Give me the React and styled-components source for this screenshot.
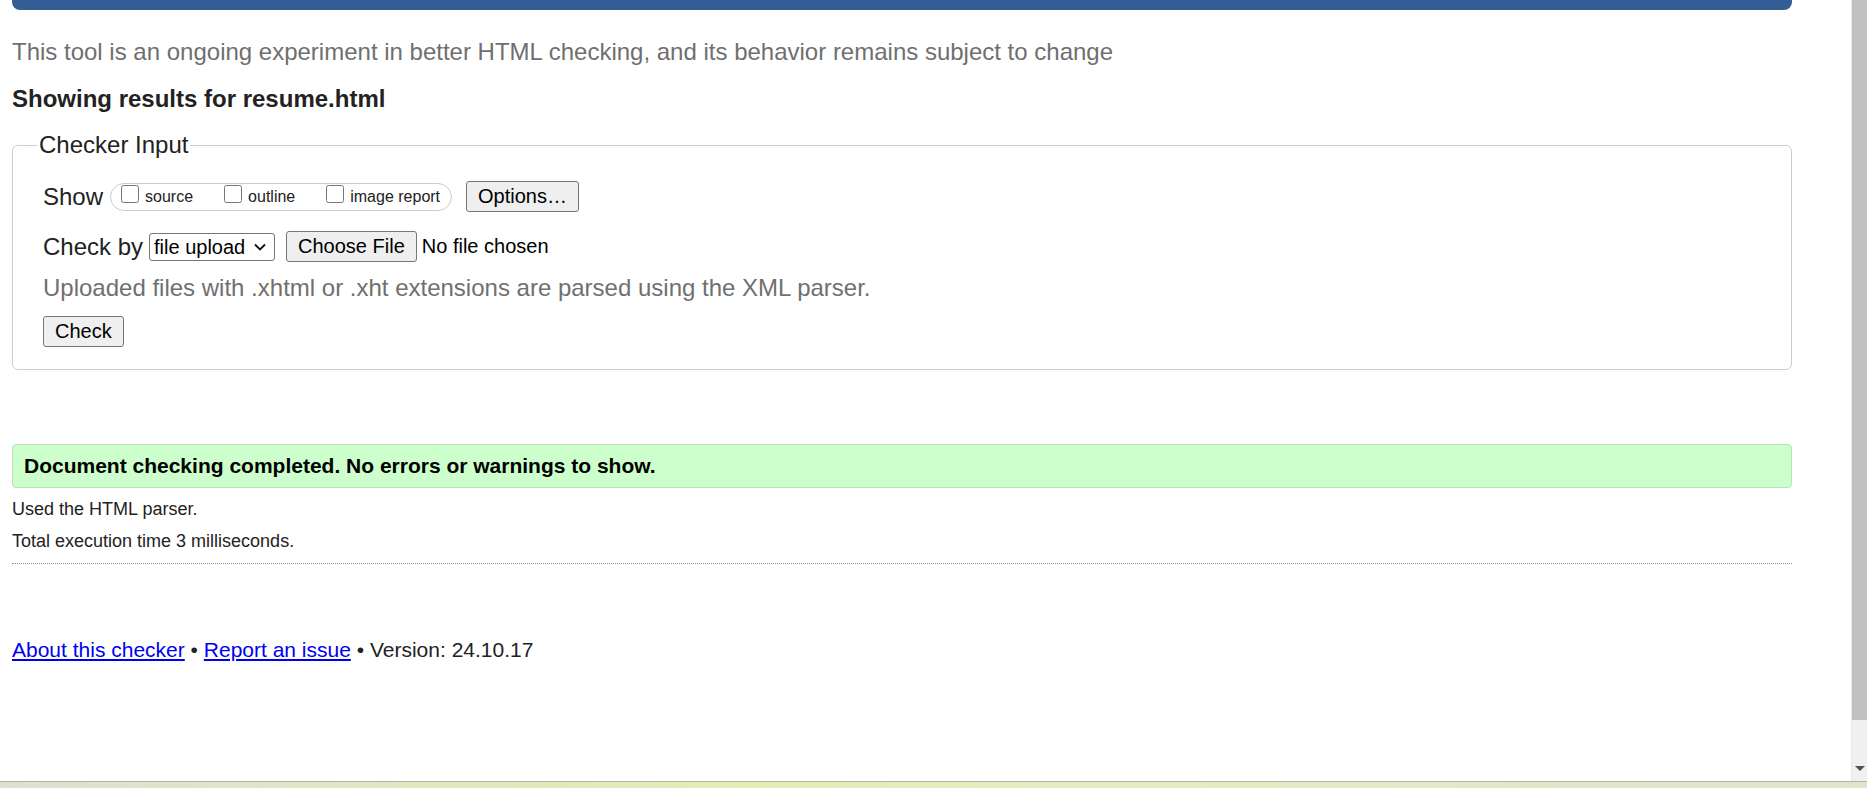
import styled, { createGlobalStyle } from 'styled-components';

const GlobalStyle = createGlobalStyle`
  html, body {
    margin: 0;
    height: 100%;
    overflow: hidden;
    background: #fff;
  }
  body {
    font-family: "Liberation Sans", Arial, sans-serif;
    color: #222;
  }
  #root {
    height: 100%;
  }
`

const Screen = styled.div`
  display: grid;
  grid-template-columns: 1fr 16px;
  grid-template-rows: 1fr 7px;
  height: 100vh;
`

const Viewport = styled.div`
  overflow: hidden;
  background: #fff;
`

const Page = styled.div`
  padding: 0 59px 0 12px;
`

const HeaderBar = styled.div`
  height: 10px;
  background: #365e96;
  border-radius: 0 0 8px 8px;
`

const Intro = styled.p`
  margin: 28px 0 0;
  font-size: 24px;
  line-height: 28px;
  color: #6f6f6f;
`

const Heading = styled.h2`
  margin: 19px 0 0;
  font-size: 24px;
  line-height: 28px;
  font-weight: bold;
  color: #222;
`

const InputSet = styled.fieldset`
  margin: 18px 0 0;
  padding: 22px 24px 22px 30px;
  border: 1px solid #cdcdcd;
  border-radius: 6px;
  min-width: 0;
`

const Legend = styled.legend`
  margin-left: -6px;
  padding: 0 2px;
  font-size: 24px;
  line-height: 28px;
  color: #222;
`

const Row = styled.div`
  display: flex;
  align-items: center;
  margin-top: ${p => p.$top || 0}px;
  font-size: 24px;
`

const Label = styled.span`
  font-size: 24px;
  line-height: 28px;
  color: #222;
`

const Pill = styled.div`
  display: flex;
  align-items: center;
  gap: 31px;
  height: 26px;
  margin-left: 7px;
  padding: 0 11px 0 10px;
  border: 1px solid #cccccc;
  border-radius: 14px;
`

const CheckItem = styled.label`
  display: flex;
  align-items: center;
  gap: 6px;
  font-size: 16px;
  line-height: 18px;
  color: #222;
`

const Box = styled.input`
  width: 18px;
  height: 18px;
  margin: 0 0 5px;
`

const Button = styled.button`
  height: 31px;
  margin-left: ${p => p.$left || 0}px;
  padding: 0 11px;
  font-family: "Liberation Sans", Arial, sans-serif;
  font-size: 20px;
  color: #000;
  background: #efefef;
  border: 1px solid #767676;
  border-radius: 3px;
`

const SelectWrap = styled.div`
  display: flex;
  align-items: center;
  box-sizing: border-box;
  width: 126px;
  height: 28px;
  margin-left: 6px;
  padding: 0 8px 0 4px;
  background: #fff;
  border: 1px solid #767676;
  border-radius: 3px;
`

const Select = styled.select`
  flex: 1;
  min-width: 0;
  appearance: none;
  padding: 0;
  font-family: "Liberation Sans", Arial, sans-serif;
  font-size: 20px;
  color: #000;
  background: transparent;
  border: 0;
  outline: none;
`

const Chevron = () => (
  <svg width="12" height="8" viewBox="0 0 12 8">
    <path d="M1 1.5 L6 6.5 L11 1.5" fill="none" stroke="#111" strokeWidth="1.8"/>
  </svg>
)

const FileState = styled.span`
  margin-left: 5px;
  font-size: 20px;
  color: #000;
`

const Note = styled.p`
  margin: 12px 0 0;
  font-size: 24px;
  line-height: 28px;
  color: #707070;
`

const CheckRow = styled.div`
  margin-top: 14px;
`

const Success = styled.div`
  margin-top: 74px;
  padding: 9px 11px 9px;
  font-size: 21px;
  line-height: 24px;
  font-weight: bold;
  color: #000;
  background: #ccffcc;
  border: 1px solid #bcdfbc;
  border-radius: 4px;
`

const Detail = styled.p`
  margin: ${p => p.$top}px 0 0;
  font-size: 18px;
  line-height: 21px;
  color: #222;
`

const Rule = styled.hr`
  margin: 11px 0 0;
  border: 0;
  border-top: 1px dotted #8a8a8a;
  height: 0;
`

const Footer = styled.p`
  margin: 74px 0 0;
  font-size: 21px;
  line-height: 24px;
  color: #222;
`

const Link = styled.a`
  color: #0000ee;
  text-decoration: underline;
`

const Scrollbar = styled.div`
  display: flex;
  flex-direction: column;
  background: #f0f0f0;
  border-left: 1px solid #e8e8e8;
`

const Thumb = styled.div`
  height: 720px;
  background: #c1c1c1;
`

const Track = styled.div`
  flex: 1;
  display: flex;
  align-items: flex-end;
  justify-content: center;
  padding-bottom: 10px;
`

const Arrow = styled.div`
  width: 0;
  height: 0;
  border-left: 5px solid transparent;
  border-right: 5px solid transparent;
  border-top: 5px solid #505050;
`

const Taskbar = styled.div`
  grid-column: 1 / 3;
  border-top: 1px solid #b2b3a4;
  background: linear-gradient(90deg, #dfe0d2 0%, #e3edb4 40%, #e6edc2 55%, #e1e3cc 100%);
`

const App = () => {
  return (
    <>
      <GlobalStyle/>
      <Screen>
        <Viewport>
          <Page>
            <HeaderBar/>
            <Intro>This tool is an ongoing experiment in better HTML checking, and its behavior remains subject to change</Intro>
            <Heading>Showing results for resume.html</Heading>

            <InputSet>
              <Legend>Checker Input</Legend>
              <Row>
                <Label>Show</Label>
                <Pill>
                  <CheckItem><Box type="checkbox"/>source</CheckItem>
                  <CheckItem><Box type="checkbox"/>outline</CheckItem>
                  <CheckItem><Box type="checkbox"/>image report</CheckItem>
                </Pill>
                <Button $left={14}>Options…</Button>
              </Row>
              <Row $top={19}>
                <Label>Check by</Label>
                <SelectWrap>
                  <Select defaultValue="file">
                    <option value="file">file upload</option>
                    <option value="address">address</option>
                    <option value="text">text input</option>
                  </Select>
                  <Chevron/>
                </SelectWrap>
                <Button $left={11}>Choose File</Button>
                <FileState>No file chosen</FileState>
              </Row>
              <Note>Uploaded files with .xhtml or .xht extensions are parsed using the XML parser.</Note>
              <CheckRow>
                <Button>Check</Button>
              </CheckRow>
            </InputSet>

            <Success>Document checking completed. No errors or warnings to show.</Success>
            <Detail $top={11}>Used the HTML parser.</Detail>
            <Detail $top={11}>Total execution time 3 milliseconds.</Detail>
            <Rule/>

            <Footer>
              <Link href="#about">About this checker</Link> • <Link href="#issue">Report an issue</Link> • Version: 24.10.17
            </Footer>
          </Page>
        </Viewport>
        <Scrollbar>
          <Thumb/>
          <Track><Arrow/></Track>
        </Scrollbar>
        <Taskbar/>
      </Screen>
    </>
  )
}

export default App
